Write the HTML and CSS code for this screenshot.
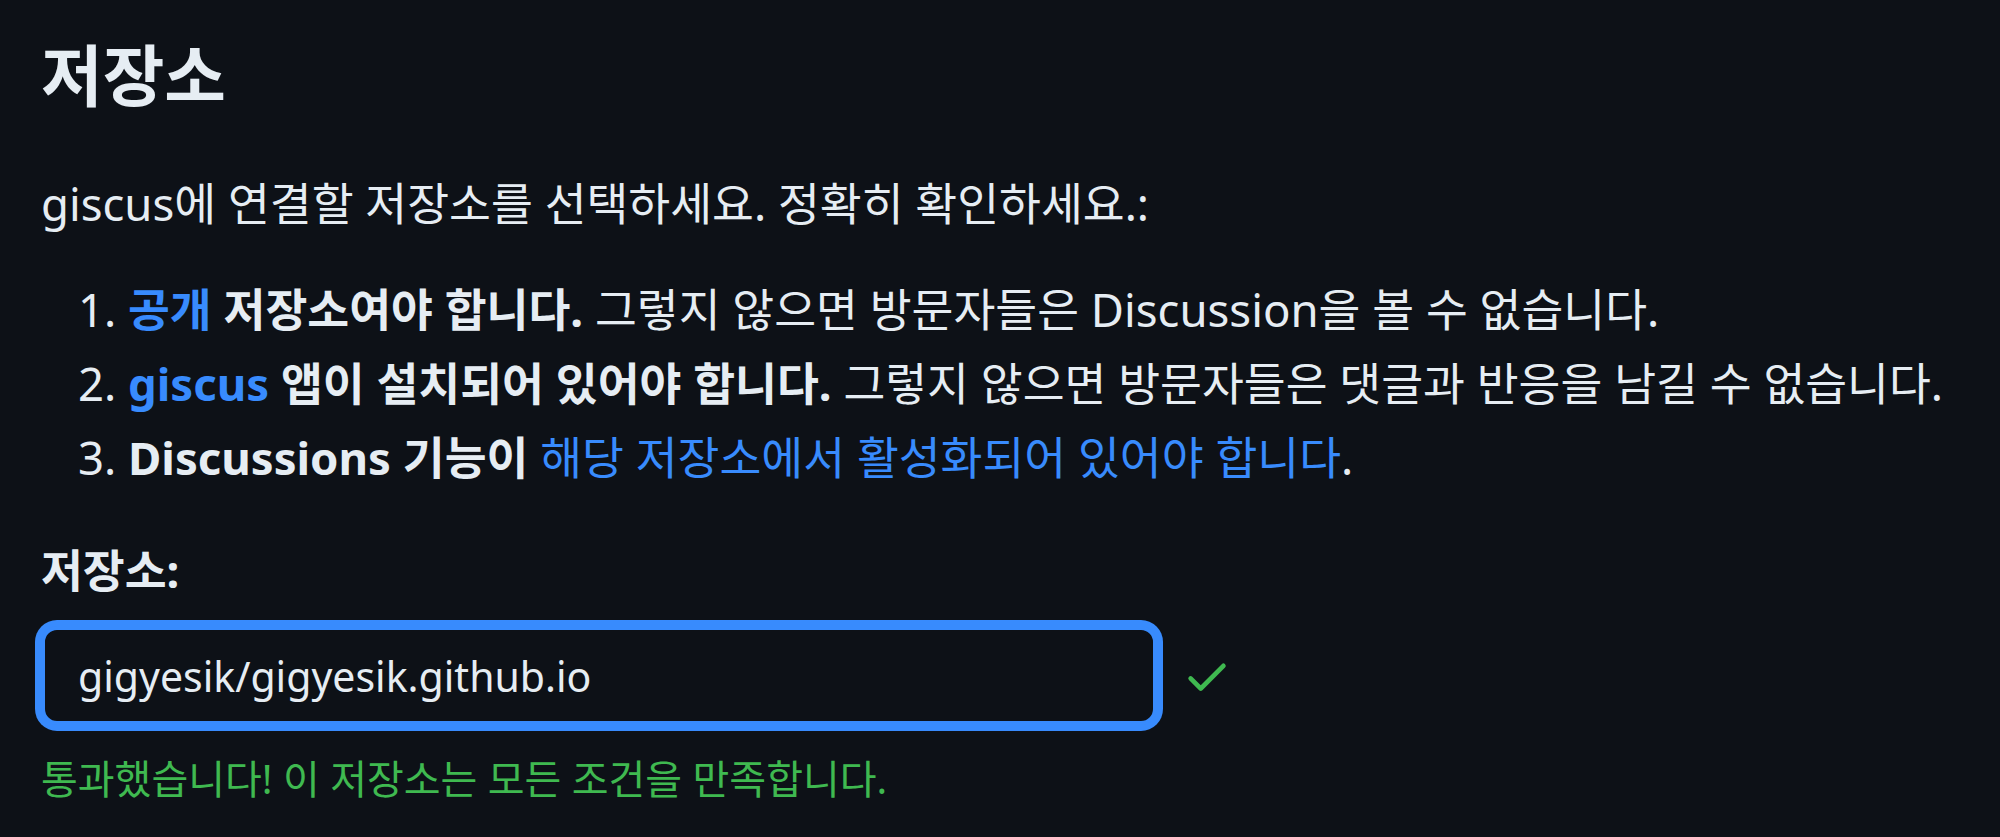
FILE: index.html
```html
<!DOCTYPE html>
<html lang="ko">
<head>
  <meta charset="UTF-8">
  <meta name="viewport" content="width=device-width, initial-scale=1.0">
  <title>giscus - 저장소</title>
  <link rel="stylesheet" href="styles.css">
</head>
<body>
  <div class="section">
    <h2>저장소</h2>
    <p>giscus에 연결할 저장소를 선택하세요. 정확히 확인하세요.:</p>

    <ol class="rules">
      <li><a href="#"><strong>공개</strong></a> <strong>저장소여야 합니다.</strong> 그렇지 않으면 방문자들은 Discussion을 볼 수 없습니다.</li>
      <li><a href="#"><strong>giscus</strong></a> <strong>앱이 설치되어 있어야 합니다.</strong> 그렇지 않으면 방문자들은 댓글과 반응을 남길 수 없습니다.</li>
      <li><strong>Discussions 기능이</strong> <a href="#">해당 저장소에서 활성화되어 있어야 합니다</a>.</li>
    </ol>

    <label for="repo" class="field-label">저장소:</label>
    <div class="field-row">
      <input type="text" id="repo" value="gigyesik/gigyesik.github.io" />
      <svg class="check" viewBox="0 0 16 16" width="50" height="50" aria-hidden="true">
        <path d="M13.78 4.22a.75.75 0 0 1 0 1.06l-7.25 7.25a.75.75 0 0 1-1.06 0L2.22 9.28a.751.751 0 0 1 .018-1.042.751.751 0 0 1 1.042-.018L6 10.94l6.72-6.72a.75.75 0 0 1 1.06 0Z"></path>
      </svg>
    </div>
    <p class="success">통과했습니다! 이 저장소는 모든 조건을 만족합니다.</p>
  </div>
</body>
</html>
```

FILE: styles.css
```css
body {
  margin: 0;
  background: #0d1117;
  color: #e6edf3;
  font-family: "Noto Sans", "Noto Sans CJK KR", sans-serif;
  font-size: 45.5px;
  line-height: 63px;
}
.section { padding: 0 0 0 41px; }
h2 {
  font-size: 67px;
  line-height: 74px;
  margin: 38px 0 0;
}
p { margin: 60px 0 0; }
a { color: #388bfd; text-decoration: none; }
.rules {
  margin: 43px 0 0;
  padding-left: 87px;
}
.rules li + li { margin-top: 11px; }
.field-label {
  display: block;
  margin-top: 50px;
  font-weight: bold;
}
.field-row {
  display: flex;
  align-items: center;
  margin-top: 24px;
}
#repo {
  width: 1116px;
  height: 99px;
  box-sizing: border-box;
  padding: 0 33px;
  background: #0d1117;
  color: #e6edf3;
  font-family: inherit;
  font-size: 41px;
  border: 4px solid #388bfd;
  border-radius: 16px;
  box-shadow: 0 0 0 6px #388bfd;
  outline: none;
}
.check {
  fill: #3fb950;
  margin-left: 25px;
}
.success {
  margin-top: 27px;
  font-size: 40px;
  line-height: 54px;
  color: #3fb950;
}
```
